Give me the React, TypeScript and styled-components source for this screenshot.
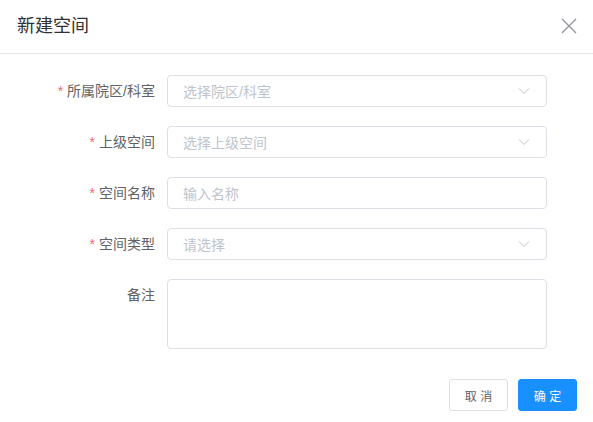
import { ReactElement } from "react";
import styled, { createGlobalStyle } from "styled-components";

const GlobalStyle = createGlobalStyle`
  html, body {
    margin: 0;
    padding: 0;
    background: #ffffff;
  }
  body {
    font-family: "Liberation Sans", "Noto Sans CJK SC", sans-serif;
  }
  * {
    box-sizing: border-box;
  }
`;

type Field = {
  label: string;
  required: boolean;
  placeholder: string;
  kind: "select" | "input" | "textarea";
};

const fields: Field[] = [
  { label: "所属院区/科室", required: true, placeholder: "选择院区/科室", kind: "select" },
  { label: "上级空间", required: true, placeholder: "选择上级空间", kind: "select" },
  { label: "空间名称", required: true, placeholder: "输入名称", kind: "input" },
  { label: "空间类型", required: true, placeholder: "请选择", kind: "select" },
  { label: "备注", required: false, placeholder: "", kind: "textarea" },
];

const Chevron = (): ReactElement => (
  <svg width="12" height="8" viewBox="0 0 12 8">
    <polyline points="1,1.5 6,6.5 11,1.5" fill="none" stroke="#c0c4cc" strokeWidth="1" />
  </svg>
);

const CloseIcon = (): ReactElement => (
  <svg width="16" height="16" viewBox="0 0 16 16">
    <path d="M1 1 L15 15 M15 1 L1 15" stroke="#909399" strokeWidth="1.3" fill="none" />
  </svg>
);

export default function App(): ReactElement {
  return (
    <>
      <GlobalStyle />
      <Dialog>
        <Header>
          <Title>新建空间</Title>
          <CloseButton aria-label="close">
            <CloseIcon />
          </CloseButton>
        </Header>
        <Body>
          {fields.map((f) => (
            <Row key={f.label}>
              <Label>
                {f.required && <Star>*</Star>}
                {f.label}
              </Label>
              {f.kind === "textarea" ? (
                <TextArea />
              ) : (
                <InputBox>
                  <Placeholder>{f.placeholder}</Placeholder>
                  {f.kind === "select" && <Chevron />}
                </InputBox>
              )}
            </Row>
          ))}
        </Body>
        <Footer>
          <Button>取 消</Button>
          <Button primary>确 定</Button>
        </Footer>
      </Dialog>
    </>
  );
}

const Dialog = styled.div`
  width: 593px;
  height: 422px;
  background: #fff;
  display: flex;
  flex-direction: column;
`;

const Header = styled.div`
  height: 54px;
  border-bottom: 1px solid #e4e7ed;
  display: flex;
  align-items: center;
  justify-content: space-between;
  padding: 0 16px 1px 17px;
`;

const Title = styled.div`
  font-size: 18px;
  color: #303133;
  line-height: 24px;
`;

const CloseButton = styled.button`
  border: none;
  background: none;
  padding: 0;
  width: 16px;
  height: 16px;
  display: flex;
  cursor: pointer;
`;

const Body = styled.div`
  padding-top: 21px;
  display: flex;
  flex-direction: column;
  gap: 19px;
`;

const Row = styled.div`
  display: flex;
  align-items: flex-start;
`;

const Label = styled.div`
  width: 167px;
  padding-right: 12px;
  text-align: right;
  font-size: 14px;
  line-height: 32px;
  color: #606266;
`;

const Star = styled.span`
  color: #f56c6c;
  margin-right: 4px;
`;

const InputBox = styled.div`
  width: 380px;
  height: 32px;
  border: 1px solid #dcdfe6;
  border-radius: 4px;
  display: flex;
  align-items: center;
  justify-content: space-between;
  padding: 0 16px 0 15px;
`;

const Placeholder = styled.span`
  font-size: 14px;
  color: #c0c4cc;
`;

const TextArea = styled.div`
  width: 380px;
  height: 70px;
  border: 1px solid #dcdfe6;
  border-radius: 4px;
`;

const Footer = styled.div`
  display: flex;
  justify-content: flex-end;
  gap: 10px;
  padding: 30px 16px 0 0;
`;

const Button = styled.button<{ primary?: boolean }>`
  width: 59px;
  height: 32px;
  border-radius: 3px;
  font-size: 12px;
  font-family: "Liberation Sans", "Noto Sans CJK SC", sans-serif;
  border: 1px solid ${({ primary }) => (primary ? "#1890ff" : "#dcdfe6")};
  background: ${({ primary }) => (primary ? "#1890ff" : "#fff")};
  color: ${({ primary }) => (primary ? "#fff" : "#606266")};
  cursor: pointer;
  padding: 0;
`;
